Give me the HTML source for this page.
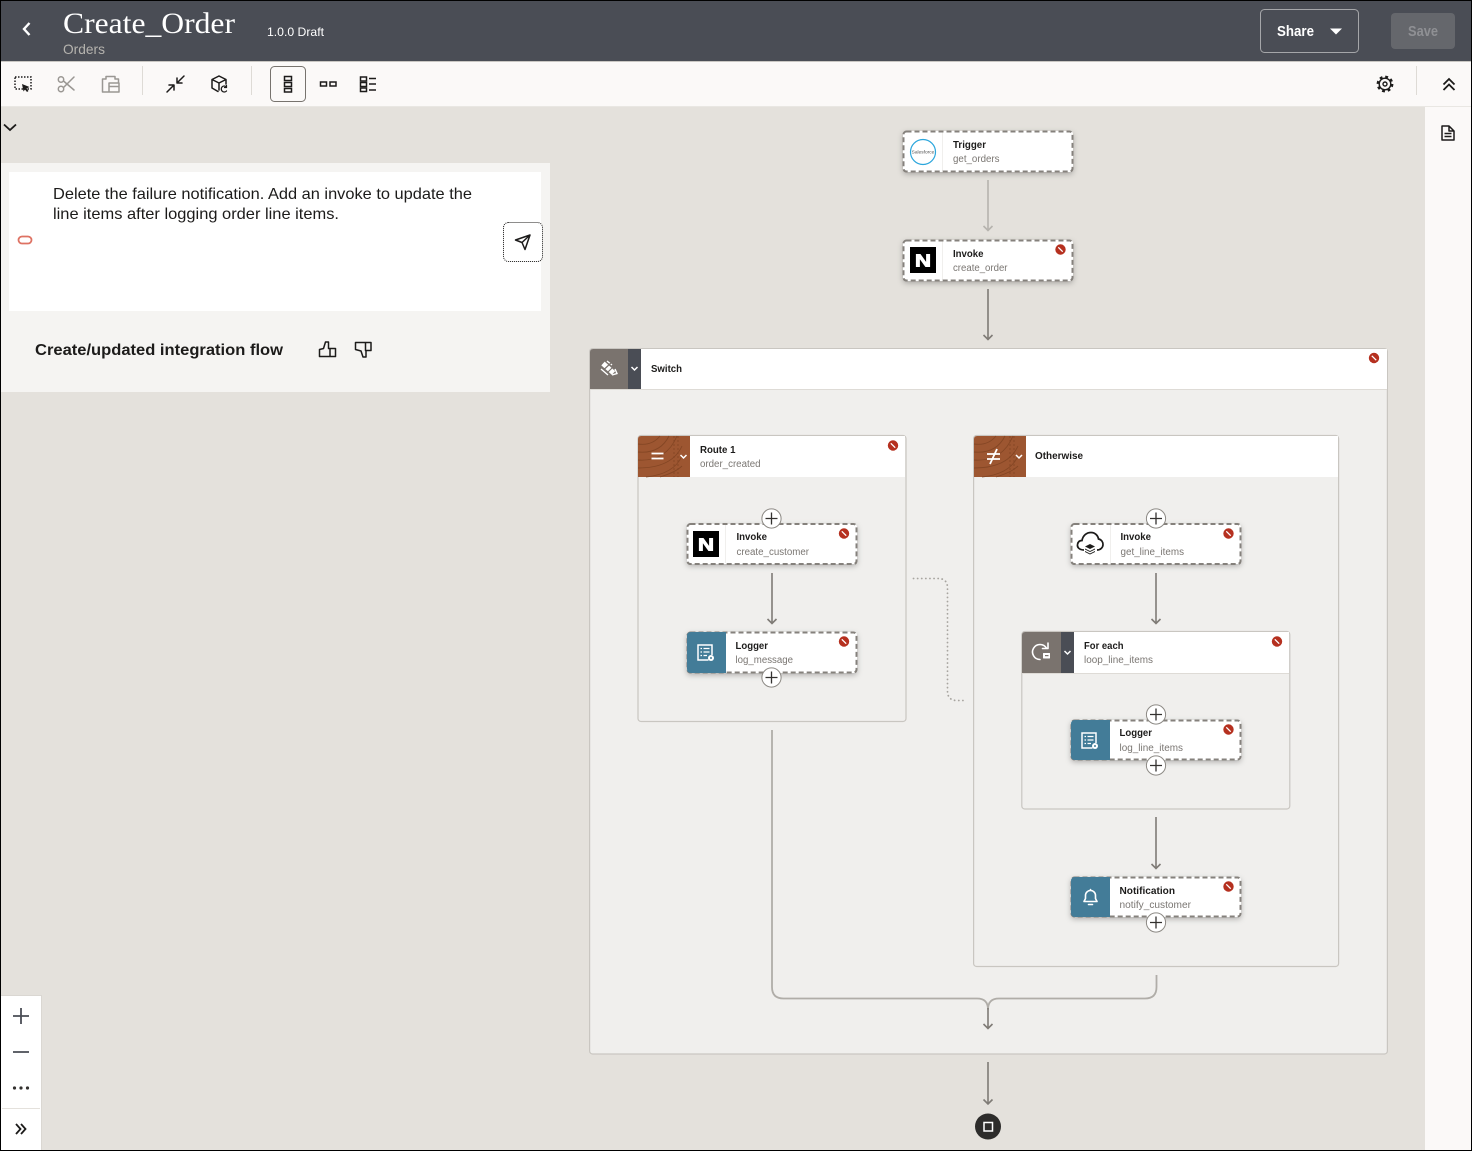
<!DOCTYPE html>
<html lang="en"><head><meta charset="utf-8"><title>Create_Order</title>
<style>
html,body{margin:0;padding:0;width:1472px;height:1151px;overflow:hidden;background:#e4e1dc}
svg{display:block;font-family:"Liberation Sans",sans-serif}
.t{font-size:10.5px;font-weight:700;fill:#1c1b1a}
.s{font-size:10px;fill:#7a7672}
.nb{fill:#fff;filter:drop-shadow(0 2px 3px rgba(0,0,0,.28))}
.nd{fill:none;stroke:#85817c;stroke-width:2;stroke-dasharray:5 3}
.ic{fill:none;stroke:#1c1b1a;stroke-width:1.5;stroke-linecap:round;stroke-linejoin:round}
.dis{stroke:#9a9793}
.wi{fill:none;stroke:#fff;stroke-width:1.6;stroke-linecap:round;stroke-linejoin:round}
.ar{fill:none;stroke:#7f7b76;stroke-width:1.6}
.arl{fill:none;stroke:#b6b3ae;stroke-width:1.6}
.box{fill:#f0efed;stroke:#c9c6c1;stroke-width:1.2}
</style></head><body>
<svg width="1472" height="1151" viewBox="0 0 1472 1151" xmlns="http://www.w3.org/2000/svg">
<defs>
<g id="err"><circle r="5.2" fill="#b5301f"/><path d="M-2.2-2.2 2.2 2.2" stroke="#fff" stroke-width="1.3"/></g>
<g id="plus"><circle r="9.6" fill="#fff" stroke="#8d8a85" stroke-width="1"/><path d="M-6 0H6M0-6V6" stroke="#33312f" stroke-width="1.3"/></g>
<g id="chev"><path d="M-3-1.5 0 1.5 3-1.5" fill="none" stroke="#fff" stroke-width="1.5"/></g>
<g id="log"><path d="M3 8H-7.500V-7H6.500V3" fill="none" stroke="#fff" stroke-width="1.500"/><path d="M-5-3.500H-3.500M-2-3.500H4M-5 0H-3.500M-2 0H4M-5 3.500H-3.500M-2 3.500H1.500" stroke="#fff" stroke-width="1.300" fill="none"/><circle cx="5.500" cy="6" r="3" fill="#fff"/><circle cx="5.500" cy="6" r="1" fill="#437c98"/></g>
<g id="wood" fill="none" stroke="#7f4322" stroke-width=".9" opacity=".8">
<path d="M0 8Q14 10 22 0M0 16Q22 18 31 0M0 24Q28 26 39 0M0 32Q34 32 44 10M8 41Q36 38 44 20M22 41Q38 36 44 30"/>
<path d="M36 0V41M40 0V41" stroke-dasharray="2 2"/>
</g>
</defs>

<rect width="1472" height="1151" fill="#e4e1dc"/>

<!-- header -->
<rect x="0" y="0" width="1472" height="61" fill="#4a4d55"/>
<rect x="0" y="61" width="1472" height="1" fill="#c9c7c3"/>
<path d="M29.500 23 24 29 29.500 35" fill="none" stroke="#fff" stroke-width="2.400"/>
<text x="63" y="33" font-family="'Liberation Serif',serif" font-size="30" fill="#fff" textLength="172" lengthAdjust="spacingAndGlyphs">Create_Order</text>
<text x="63" y="54" font-size="14" fill="#b5b3ae" textLength="42" lengthAdjust="spacingAndGlyphs">Orders</text>
<text x="267" y="36" font-size="12" fill="#fff" textLength="57" lengthAdjust="spacingAndGlyphs">1.0.0 Draft</text>
<rect x="1260.500" y="9.500" width="98" height="43" rx="4" fill="none" stroke="#a5a6a9"/>
<text x="1277" y="36" font-size="14.500" font-weight="700" fill="#fff" textLength="37" lengthAdjust="spacingAndGlyphs">Share</text>
<path d="M1330 28.500H1342L1336 34.500Z" fill="#fff"/>
<rect x="1391" y="13" width="64" height="36" rx="4" fill="#65676c"/>
<text x="1408" y="36" font-size="14.500" font-weight="700" fill="#8f9094" textLength="30" lengthAdjust="spacingAndGlyphs">Save</text>

<!-- toolbar -->
<rect x="0" y="62" width="1472" height="44" fill="#fbf9f8"/>
<rect x="0" y="106" width="1472" height="1" fill="#e9e7e3"/>
<rect x="142" y="66" width="1" height="29" fill="#dedbd6"/>
<rect x="251" y="66" width="1" height="29" fill="#dedbd6"/>
<rect x="1416" y="66" width="1" height="29" fill="#dedbd6"/>
<rect x="270.500" y="66.500" width="35" height="35" rx="4" fill="none" stroke="#77736e"/>
<!-- select -->
<rect x="15" y="77" width="16" height="12" fill="none" stroke="#1c1b1a" stroke-width="1.500" stroke-dasharray="1.500 1.500"/>
<path d="M22 84 29.500 87 26.500 88.500 28.500 91 27 92 25 89.500 23.500 91.500Z" fill="#1c1b1a"/>
<!-- scissors -->
<g class="ic dis"><circle cx="61" cy="79.500" r="2.700"/><circle cx="61" cy="89" r="2.700"/><path d="M63.500 81 74 90M63.500 87.500 74 77"/></g>
<!-- paste -->
<g class="ic dis"><path d="M109 92H102.500V79H106V76.500H115V79H118.500V83M109 83H119V92H109ZM109 86.500H119"/></g>
<!-- collapse -->
<g class="ic" stroke-width="1.700"><path d="M184 76 177 83M177 78V83H182M167 92 174 85M169 85H174V90"/></g>
<!-- cube -->
<g class="ic"><path d="M219 76 226 79.500V84M219 76 212 79.500V88L218 91.500M212 79.500 219 83 226 79.500M219 83V90"/><path d="M226.500 87A3 3 0 1 0 226.500 91" stroke-width="1.300"/><path d="M226.500 85.500V87.500H224.500" stroke-width="1.200"/></g>
<!-- layouts -->
<g fill="none" stroke="#1c1b1a" stroke-width="1.500"><rect x="284.500" y="76.500" width="7" height="4"/><rect x="284.500" y="82.500" width="7" height="4"/><rect x="284.500" y="88.500" width="7" height="3.500"/>
<rect x="320.500" y="82" width="6" height="4"/><rect x="330" y="82" width="6" height="4"/>
<rect x="360.500" y="77" width="6" height="4"/><rect x="360.500" y="82.500" width="6" height="4"/><rect x="360.500" y="88" width="6" height="3.500"/><path d="M369 78.500H376M369 84H376M369 90H376"/></g>
<!-- gear -->
<circle cx="1385" cy="84" r="7" fill="none" stroke="#1c1b1a" stroke-width="2.800" stroke-dasharray="2.750 2.750"/>
<circle cx="1385" cy="84" r="5.800" fill="none" stroke="#1c1b1a" stroke-width="1.400"/>
<circle cx="1385" cy="84" r="2" fill="none" stroke="#1c1b1a" stroke-width="1.400"/>
<path d="M1443.500 84.500 1449 79 1454.500 84.500M1443.500 90 1449 84.500 1454.500 90" fill="none" stroke="#1c1b1a" stroke-width="1.800"/>

<!-- right rail -->
<rect x="1425" y="107" width="47" height="1044" fill="#fbf9f8"/>
<g class="ic" stroke-width="1.600"><path d="M1442 126H1449L1454 131V140H1442ZM1449 126V131H1454M1444.500 133.500H1451.500M1444.500 136.500H1451.500" stroke-linecap="butt"/></g>

<!-- collapse chevron -->
<path d="M4 124.500 10 130 16 124.500" fill="none" stroke="#1c1b1a" stroke-width="1.800"/>

<!-- prompt panel -->
<rect x="1" y="163" width="549" height="229" fill="#f5f4f2"/>
<rect x="9" y="172" width="532" height="139" fill="#fff"/>
<text x="53" y="199" font-size="16" fill="#1c1b1a" textLength="419" lengthAdjust="spacingAndGlyphs">Delete the failure notification. Add an invoke to update the</text>
<text x="53" y="219" font-size="16" fill="#1c1b1a" textLength="286" lengthAdjust="spacingAndGlyphs">line items after logging order line items.</text>
<rect x="18.500" y="236.500" width="13" height="7" rx="3.500" fill="none" stroke="#de7263" stroke-width="1.800"/>
<rect x="503.500" y="222.500" width="39" height="39" rx="5" fill="#fff" stroke="#1c1b1a" stroke-dasharray="1 1"/>
<g class="ic" stroke-width="1.600"><path d="M515.500 240 530 235 525 249.500 522 242.500ZM522 242.500 530 235"/></g>
<text x="35" y="355" font-size="16" font-weight="700" fill="#1c1b1a" textLength="248" lengthAdjust="spacingAndGlyphs">Create/updated integration flow</text>
<g class="ic" stroke-width="1.500"><path d="M319.500 356.500V349.500L323.500 348.500 325.500 342H328.500V348.500H335.500V356.500ZM330 348.500V356.500"/><path d="M355.500 342.500H371V350.500H366V357H363L361 351 355.500 349.500ZM365.500 342.500V350.500"/></g>

<!-- zoom controls -->
<rect x="1" y="996" width="41" height="155" fill="#fff"/>
<rect x="41" y="996" width="1" height="155" fill="#dad7d2"/>
<rect x="1" y="995" width="41" height="1" fill="#dad7d2"/>
<rect x="2" y="1108" width="38" height="1" fill="#e4e1dc"/>
<path d="M13 1016H29M21 1008V1024M13 1052H29" stroke="#4a4d55" stroke-width="1.800" fill="none"/>
<circle cx="14.500" cy="1088" r="1.600" fill="#33312f"/><circle cx="21" cy="1088" r="1.600" fill="#33312f"/><circle cx="27.500" cy="1088" r="1.600" fill="#33312f"/>
<path d="M16 1124 20.500 1129 16 1134M21 1124 25.500 1129 21 1134" fill="none" stroke="#1c1b1a" stroke-width="1.800"/>

<!-- top-level arrows -->
<path class="arl" d="M988 180V231M983.500 226 988 230.500 992.500 226"/>
<path class="ar" d="M988 289V339M983.500 335 988 339.500 992.500 335"/>

<!-- Trigger -->
<rect class="nb" x="903" y="131" width="170" height="41" rx="3"/>
<rect x="942" y="132" width="1" height="39" fill="#f0efed"/>
<rect class="nd" x="903.500" y="131.500" width="169" height="40" rx="3"/>
<circle cx="923" cy="152" r="12.500" fill="#fff" stroke="#2ba6dc" stroke-width="1.200"/>
<text x="923" y="153.500" font-size="4.800" fill="#555" text-anchor="middle">Salesforce</text>
<text class="t" x="953" y="148" textLength="33" lengthAdjust="spacingAndGlyphs">Trigger</text><text class="s" x="953" y="162" textLength="46.500" lengthAdjust="spacingAndGlyphs">get_orders</text>

<!-- Invoke create_order -->
<rect class="nb" x="903" y="240" width="170" height="41" rx="3"/>
<rect x="942" y="241" width="1" height="39" fill="#f0efed"/>
<rect class="nd" x="903.500" y="240.500" width="169" height="40" rx="3"/>
<rect x="910" y="247" width="26" height="26" fill="#000"/>
<text x="915" y="266.700" font-size="17.700" font-weight="700" fill="#fff" stroke="#fff" stroke-width=".9" textLength="16" lengthAdjust="spacingAndGlyphs">N</text>
<text class="t" x="953" y="257" textLength="30.500" lengthAdjust="spacingAndGlyphs">Invoke</text><text class="s" x="953" y="271" textLength="54.500" lengthAdjust="spacingAndGlyphs">create_order</text>
<use href="#err" x="1060.500" y="249.500"/>

<!-- Switch -->
<rect class="box" x="589.600" y="348.600" width="797.800" height="705.400" rx="3"/>
<path d="M590 352Q590 349 593 349H1387V389H590Z" fill="#fff"/>
<rect x="590" y="389" width="797" height="1" fill="#dedbd6"/>
<path d="M590 352Q590 349 593 349H628V389H590Z" fill="#7a736e"/>
<rect x="628" y="349" width="13" height="40" fill="#4a4d55"/>
<use href="#chev" x="634.500" y="368.500"/>
<path d="M603 363.500 613.500 373" stroke="#fff" stroke-width="5" fill="none"/>
<path d="M601 369 608 375M607 361 612 365M612 375 617 373.500 615 369" stroke="#fff" stroke-width="1.400" fill="none"/>
<path d="M604 369.500 612 362M607 373 614 366" stroke="#7a736e" stroke-width="1.200" fill="none"/>
<text class="t" x="651" y="372" textLength="31" lengthAdjust="spacingAndGlyphs">Switch</text>
<use href="#err" x="1374" y="358"/>

<!-- Route 1 -->
<rect class="box" x="638" y="435.500" width="268" height="286" rx="3"/>
<path d="M638 439Q638 436 641 436H905V477H638Z" fill="#fff"/>
<path d="M638 439Q638 436 641 436H690V477H638Z" fill="#9d5631"/>
<use href="#wood" x="638" y="436"/>
<path d="M651.500 453.500H663.500M651.500 458.500H663.500" stroke="#fff" stroke-width="1.800"/>
<use href="#chev" x="683.500" y="456.500"/>
<text class="t" x="700" y="453" textLength="35.500" lengthAdjust="spacingAndGlyphs">Route 1</text><text class="s" x="700" y="467" textLength="60.500" lengthAdjust="spacingAndGlyphs">order_created</text>
<use href="#err" x="893" y="445.500"/>

<!-- Otherwise -->
<rect class="box" x="973.600" y="435.500" width="365" height="531" rx="3"/>
<path d="M974 439Q974 436 977 436H1338V477H974Z" fill="#fff"/>
<path d="M974 439Q974 436 977 436H1026V477H974Z" fill="#9d5631"/>
<use href="#wood" x="974" y="436"/>
<path d="M987 454H1000M987 459H1000M990 464 997 449" stroke="#fff" stroke-width="1.800" fill="none"/>
<use href="#chev" x="1019" y="456.500"/>
<text class="t" x="1035" y="459" textLength="48" lengthAdjust="spacingAndGlyphs">Otherwise</text>

<!-- dotted link -->
<path d="M913.500 578.500H938Q947.500 578.500 947.500 588V691Q947.500 700.500 957 700.500H964" fill="none" stroke="#a8a5a0" stroke-width="1.800" stroke-linecap="round" stroke-dasharray=".1 4"/>

<!-- Invoke create_customer -->
<rect class="nb" x="687" y="524" width="170" height="40" rx="3"/>
<rect x="725" y="525" width="1" height="38" fill="#f0efed"/>
<rect class="nd" x="687.500" y="524" width="169" height="40" rx="3"/>
<rect x="693" y="531" width="26" height="26" fill="#000"/>
<text x="698" y="550.700" font-size="17.700" font-weight="700" fill="#fff" stroke="#fff" stroke-width=".9" textLength="16" lengthAdjust="spacingAndGlyphs">N</text>
<text class="t" x="736.500" y="540" textLength="30.500" lengthAdjust="spacingAndGlyphs">Invoke</text><text class="s" x="736.500" y="555" textLength="72.500" lengthAdjust="spacingAndGlyphs">create_customer</text>
<use href="#err" x="844" y="533.500"/>
<use href="#plus" x="771.500" y="518.500"/>
<path class="ar" d="M772 573V623M767.500 619 772 623.500 776.500 619"/>

<!-- Logger log_message -->
<rect class="nb" x="687" y="632" width="170" height="41" rx="3"/>
<rect class="nd" x="687.500" y="632.500" width="169" height="40" rx="3"/>
<path d="M691 632H726V673H691Q687 673 687 669V636Q687 632 691 632Z" fill="#437c98"/>
<use href="#log" x="705.500" y="652"/>
<text class="t" x="735.500" y="649" textLength="32.500" lengthAdjust="spacingAndGlyphs">Logger</text><text class="s" x="735.500" y="663" textLength="57.500" lengthAdjust="spacingAndGlyphs">log_message</text>
<use href="#err" x="844" y="641.500"/>
<use href="#plus" x="771.500" y="677.500"/>

<!-- Invoke get_line_items -->
<rect class="nb" x="1071" y="524" width="170" height="40" rx="3"/>
<rect x="1110" y="525" width="1" height="38" fill="#f0efed"/>
<rect class="nd" x="1071.500" y="524" width="169" height="40" rx="3"/>
<path d="M1084 550C1079 550 1077 547 1077.500 544.500C1078 541.500 1080 540.500 1082 540.500C1083 535 1087 532.500 1091 532.500C1095 532.500 1098 535.500 1098.500 539C1101.500 539.500 1103 542 1103 544.500C1103 547.500 1100.500 550 1097 550" fill="none" stroke="#1c1b1a" stroke-width="1.700"/>
<path d="M1090 544 1095 546.500 1090 549 1085 546.500ZM1085 548.500 1090 551 1095 548.500V549.500L1090 552 1085 549.500ZM1085 551 1090 553.500 1095 551V552L1090 554.500 1085 552Z" fill="#1c1b1a"/>
<text class="t" x="1120.500" y="540" textLength="30.500" lengthAdjust="spacingAndGlyphs">Invoke</text><text class="s" x="1120.500" y="555" textLength="63.500" lengthAdjust="spacingAndGlyphs">get_line_items</text>
<use href="#err" x="1228.500" y="533.500"/>
<use href="#plus" x="1156" y="518.500"/>
<path class="ar" d="M1156 573V623M1151.500 619 1156 623.500 1160.500 619"/>

<!-- For each -->
<rect class="box" x="1021.800" y="631.500" width="268" height="177.500" rx="3"/>
<path d="M1022 635Q1022 632 1025 632H1289V673H1022Z" fill="#fff"/>
<rect x="1022" y="673" width="267" height="1" fill="#dedbd6"/>
<path d="M1022 635Q1022 632 1025 632H1061V673H1022Z" fill="#7a736e"/>
<rect x="1061" y="632" width="13" height="41" fill="#4a4d55"/>
<use href="#chev" x="1067.500" y="652.500"/>
<path d="M1046.500 648.200A7.500 7.500 0 1 0 1040 659.500" class="wi" stroke-width="1.900"/><path d="M1048 643V648.500H1042.500" class="wi" stroke-width="1.600"/><rect x="1043" y="653" width="7" height="5.500" rx=".5" fill="#fff"/><rect x="1045" y="655" width="3.500" height="1.200" fill="#7a736e"/>
<text class="t" x="1084" y="649" textLength="39.500" lengthAdjust="spacingAndGlyphs">For each</text><text class="s" x="1084" y="663" textLength="69" lengthAdjust="spacingAndGlyphs">loop_line_items</text>
<use href="#err" x="1277" y="641.500"/>

<!-- Logger log_line_items -->
<rect class="nb" x="1071" y="720" width="170" height="40" rx="3"/>
<rect class="nd" x="1071.500" y="720.500" width="169" height="39" rx="3"/>
<path d="M1075 720H1110V760H1075Q1071 760 1071 756V724Q1071 720 1075 720Z" fill="#437c98"/>
<use href="#log" x="1089.500" y="740"/>
<text class="t" x="1119.500" y="736" textLength="32.500" lengthAdjust="spacingAndGlyphs">Logger</text><text class="s" x="1119.500" y="751" textLength="63.500" lengthAdjust="spacingAndGlyphs">log_line_items</text>
<use href="#err" x="1228.500" y="729.500"/>
<use href="#plus" x="1156" y="714.500"/>
<use href="#plus" x="1156" y="765.500"/>

<path class="ar" d="M1156 817V868M1151.500 864 1156 868.500 1160.500 864"/>

<!-- Notification -->
<rect class="nb" x="1071" y="877" width="170" height="40" rx="3"/>
<rect class="nd" x="1071.500" y="877.500" width="169" height="39" rx="3"/>
<path d="M1075 877H1110V917H1075Q1071 917 1071 913V881Q1071 877 1075 877Z" fill="#437c98"/>
<path d="M1084 901.500 1085.500 898.500V895.500A5 5 0 0 1 1095.500 895.500V898.500L1097 901.500ZM1088.500 904.500H1092.500M1090.500 890.500V889.500" class="wi" stroke-width="1.500"/>
<text class="t" x="1119.500" y="894" textLength="55.500" lengthAdjust="spacingAndGlyphs">Notification</text><text class="s" x="1119.500" y="908" textLength="71.500" lengthAdjust="spacingAndGlyphs">notify_customer</text>
<use href="#err" x="1228.500" y="886.500"/>
<use href="#plus" x="1156" y="922.500"/>

<!-- merge -->
<path d="M772 730V987Q772 998.500 783.500 998.500H977Q988 998.500 988 1009.500Q988 998.500 999 998.500H1145Q1156.500 998.500 1156.500 987V975" fill="none" stroke="#b0ada8" stroke-width="1.800"/>
<path class="ar" d="M988 1008V1028.500M983.500 1024 988 1028.500 992.500 1024"/>
<path class="ar" d="M988 1062V1104M983.500 1099.500 988 1104 992.500 1099.500"/>
<circle cx="988" cy="1126.500" r="13" fill="#2d2c2b"/>
<rect x="984" y="1122.500" width="8.500" height="8.500" fill="none" stroke="#fff" stroke-width="1.500"/>

<!-- frame -->
<rect x=".5" y=".5" width="1471" height="1150" fill="none" stroke="#000"/>
</svg>
</body></html>
